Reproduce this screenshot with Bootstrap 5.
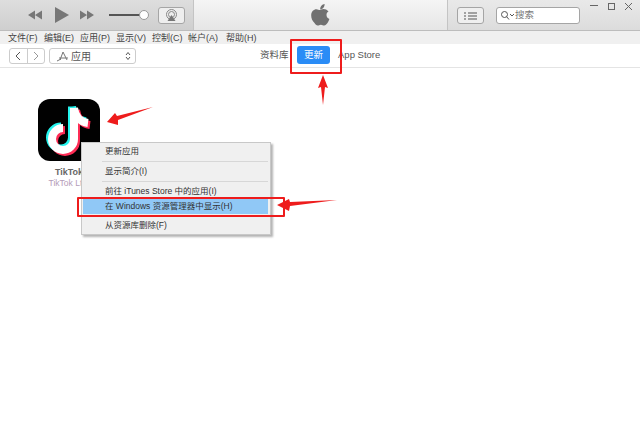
<!DOCTYPE html>
<html lang="zh-CN">
<head>
  <meta charset="UTF-8" />
  <title>iTunes</title>
  <link href="https://cdn.jsdelivr.net/npm/bootstrap@5.3.3/dist/css/bootstrap.min.css" rel="stylesheet" />
  <style>
    html, body { width: 640px; height: 437px; overflow: hidden; background: #fff; }
    body { font-family: "Liberation Sans", "Noto Sans CJK SC", sans-serif; color: #333; position: relative; }
    .top-bar { height: 31px; background: linear-gradient(#e9e9e9, #dcdcdc); border-bottom: 1px solid #bdbdbd; }
    .player-side { width: 193px; height: 30px; padding-left: 28px; background: linear-gradient(#dedede, #cfcfcf); }
    .lcd-side { width: 255px; height: 30px; background: linear-gradient(#f5f5f5, #e6e6e6); border-left: 1px solid #c4c4c4; border-right: 1px solid #c4c4c4; }
    .right-side { flex: 1; height: 30px; padding-left: 9px; position: relative; }
    .vol-track { width: 31px; height: 2px; background: #555; margin-left: 15px; }
    .vol-knob { width: 10px; height: 10px; border-radius: 50%; background: #fff; border: 1px solid #999; margin-left: -1px; }
    .air-btn { width: 27px; height: 17px; margin-left: 9px; border: 1px solid #a5a5a5; border-radius: 3px; background: #eee; }
    .list-btn { width: 27px; height: 17px; margin-top: 7px; border: 1px solid #a5a5a5; border-radius: 3px; background: #efefef; }
    .search-box { width: 84px; height: 17px; margin-top: 7px; margin-left: 12px; padding-left: 4px; gap: 1px; border: 1px solid #a5a5a5; border-radius: 3px; background: #fff; font-size: 9.5px; color: #777; }
    .win-btns { position: absolute; top: 0; right: 0; }
    .menu-strip { height: 13px; background: #f0f0f0; padding-left: 8px; gap: 8px; font-size: 9px; line-height: 14px; color: #444; }
    .menu-strip span { width: 28px; white-space: nowrap; }
    .menu-strip .menu-last { margin-left: 2px; }
    .nav-strip { height: 24px; border-bottom: 1px solid #e4e4e4; position: relative; padding: 4px 0 0 9px; }
    .pager { width: 36px; height: 16px; border: 1px solid #ccc; border-radius: 3px; }
    .pager i { flex: 1; }
    .pager i + i { border-left: 1px solid #ccc; }
    .source-pick { width: 87px; height: 16px; margin-left: 4px; border: 1px solid #ccc; border-radius: 3px; padding: 0 4px 0 7px; font-size: 10px; color: #555; }
    .source-pick span { margin-left: 2px; }
    .tab-set { position: absolute; left: 260px; top: 2px; gap: 8px; font-size: 9.5px; color: #555; line-height: 18px; }
    .tab-on { width: 33px; height: 18px; margin-left: .5px; border-radius: 3px; background: #2a8cf6; color: #fff; text-align: center; }
    .app-tile { width: 86px; margin: 31px 0 0 26px; text-align: center; }
    .app-logo { width: 62px; height: 62px; margin-left: 12px; display: block; }
    .app-name { font-size: 9px; line-height: 11px; margin-top: 6px; font-weight: 700; color: #666; white-space: nowrap; }
    .app-dev { font-size: 8.5px; line-height: 11px; color: #b49cb8; white-space: nowrap; }
    .ctx-menu { position: absolute; left: 81px; top: 142px; width: 190px; height: 93px; background: #f0f0f0; border: 1px solid #c8c8c8; box-shadow: 2px 2px 2px rgba(0,0,0,.3); font-size: 8.5px; color: #333; }
    .ctx-item { height: 17px; line-height: 16px; padding-left: 21px; margin: 0 2px; white-space: nowrap; }
    .ctx-rule { height: 1px; background: #d7d7d7; margin: 1px 2px 1px 20px; }
    .ctx-hot { background: #90c8f6; height: 15px; line-height: 15px; margin-top: -1px; margin-left: 1px; padding-left: 22px; }
    .mark-box { position: absolute; border: 2px solid #ee1c1c; border-radius: 1px; }
    .mark-tab { left: 290px; top: 39px; width: 52px; height: 35px; }
    .mark-row { left: 77px; top: 197px; width: 208px; height: 20px; }
    .marks { position: absolute; left: 0; top: 0; }
  </style>
</head>
<body>
  <div class="top-bar d-flex">
    <div class="player-side d-flex align-items-center">
      <svg width="66" height="16" viewBox="0 0 66 16"><g fill="#777"><path d="M0 8l7-4.500v9zM7 8l7-4.500v9z"/><path d="M27 0l14 8-14 8z"/><path d="M52 3.500l7 4.500-7 4.500zM59 3.500l7 4.500-7 4.500z"/></g></svg>
      <div class="vol-track"></div>
      <div class="vol-knob"></div>
      <div class="air-btn d-flex align-items-center justify-content-center">
        <svg width="13" height="13" viewBox="0 0 13 13"><g fill="none" stroke="#888"><circle cx="6.500" cy="5.500" r="5"/><circle cx="6.500" cy="5.500" r="3"/></g><path d="M6.500 6l4 6h-8z" fill="#777"/></svg>
      </div>
    </div>
    <div class="lcd-side d-flex justify-content-center align-items-center">
      <svg width="20" height="24" viewBox="0 0 20 24"><path fill="#707070" d="M13.600 1c.1 1.500-.4 2.700-1.200 3.700-.9 1-2 1.600-3.200 1.500-.1-1.300.5-2.600 1.200-3.500C11.300 1.700 12.500 1.100 13.600 1zM17.700 8.300c-1.400.9-2.200 2.100-2.200 3.700 0 1.900 1.100 3.300 2.900 4-.5 1.500-1.200 2.900-2.100 4.200-.9 1.200-1.800 2.300-3.100 2.300s-1.800-.8-3.300-.8-2 .8-3.200.8c-1.300 0-2.300-1.200-3.200-2.500C1.200 17.800.2 15 .2 12.400c0-4 2.600-6.200 5.200-6.200 1.400 0 2.500.9 3.400.9.800 0 2.100-1 3.700-1 1.900 0 3.400.8 4.700 2.200z"/></svg>
    </div>
    <div class="right-side d-flex">
      <div class="list-btn d-flex align-items-center justify-content-center">
        <svg width="13" height="8" viewBox="0 0 13 8"><path stroke="#555" stroke-width="1.200" d="M0 1h2M4 1h9M0 4h2M4 4h9M0 7h2M4 7h9"/></svg>
      </div>
      <div class="search-box d-flex align-items-center">
        <svg width="13" height="9" viewBox="0 0 13 9"><g fill="none" stroke="#555"><circle cx="3.500" cy="3.500" r="3"/><path d="M5.500 5.500l2.500 3M9 3l2 2 2-2"/></g></svg>
        <span>搜索</span>
      </div>
      <svg class="win-btns" width="50" height="12" viewBox="0 0 50 12"><g fill="none" stroke="#666" stroke-width="1"><path d="M0 5.500h8"/><rect x="18.500" y="3.500" width="6" height="6"/><path d="M35 3l7 7M42 3l-7 7"/></g></svg>
    </div>
  </div>

  <div class="menu-strip d-flex">
    <span>文件(F)</span><span>编辑(E)</span><span>应用(P)</span><span>显示(V)</span><span>控制(C)</span><span>帐户(A)</span><span class="menu-last">帮助(H)</span>
  </div>

  <div class="nav-strip d-flex">
    <div class="pager d-flex">
      <i class="d-flex align-items-center justify-content-center"><svg width="6" height="10" viewBox="0 0 6 10"><path d="M5 1L1 5l4 4" fill="none" stroke="#555"/></svg></i>
      <i class="d-flex align-items-center justify-content-center"><svg width="6" height="10" viewBox="0 0 6 10"><path d="M1 1l4 4-4 4" fill="none" stroke="#999"/></svg></i>
    </div>
    <div class="source-pick d-flex align-items-center">
      <svg width="12" height="11" viewBox="0 0 12 11"><path d="M0 10l4-2M6 1L3 9M6 1l4 8M2 7h9" fill="none" stroke="#777"/></svg>
      <span>应用</span>
      <svg class="ms-auto" width="6" height="10" viewBox="0 0 6 10"><path d="M1 4l2-2.500L5 4M1 6l2 2.500L5 6" fill="none" stroke="#555"/></svg>
    </div>
    <div class="tab-set d-flex">
      <span>资料库</span>
      <span class="tab-on">更新</span>
      <span>App Store</span>
    </div>
  </div>

  <div class="app-tile">
    <svg class="app-logo" viewBox="0 0 62 62">
      <rect width="62" height="62" rx="12" fill="#010101"/>
      <g fill="none" stroke-width="8">
        <path stroke="#25f4ee" d="M36 9v31a11 11 0 1 1-11-11M36 9c1 8 6 14 14 15" transform="translate(-2 -1.500)"/>
        <path stroke="#fe2c55" d="M36 9v31a11 11 0 1 1-11-11M36 9c1 8 6 14 14 15" transform="translate(2 2)"/>
        <path stroke="#fff" d="M36 9v31a11 11 0 1 1-11-11M36 9c1 8 6 14 14 15"/>
      </g>
    </svg>
    <div class="app-name">TikTok</div>
    <div class="app-dev">TikTok Ltd.</div>
  </div>

  <div class="ctx-menu">
    <div class="ctx-item">更新应用</div>
    <div class="ctx-rule"></div>
    <div class="ctx-item">显示简介(I)</div>
    <div class="ctx-rule"></div>
    <div class="ctx-item">前往 iTunes Store 中的应用(I)</div>
    <div class="ctx-item ctx-hot">在 Windows 资源管理器中显示(H)</div>
    <div class="ctx-rule"></div>
    <div class="ctx-item">从资源库删除(F)</div>
  </div>

  <div class="mark-box mark-tab"></div>
  <div class="mark-box mark-row"></div>
  <svg class="marks" width="640" height="437" viewBox="0 0 640 437">
    <g fill="#ee1c1c">
      <path d="M107 122l8-9 2 3 36-9-35 13 0 5z"/>
      <path d="M277 205l12-6 1 3 47-2-47 6-1 5z"/>
      <path d="M323 75l5 13-3-1-2 18-2-18-3 1z"/>
    </g>
  </svg>
</body>
</html>
